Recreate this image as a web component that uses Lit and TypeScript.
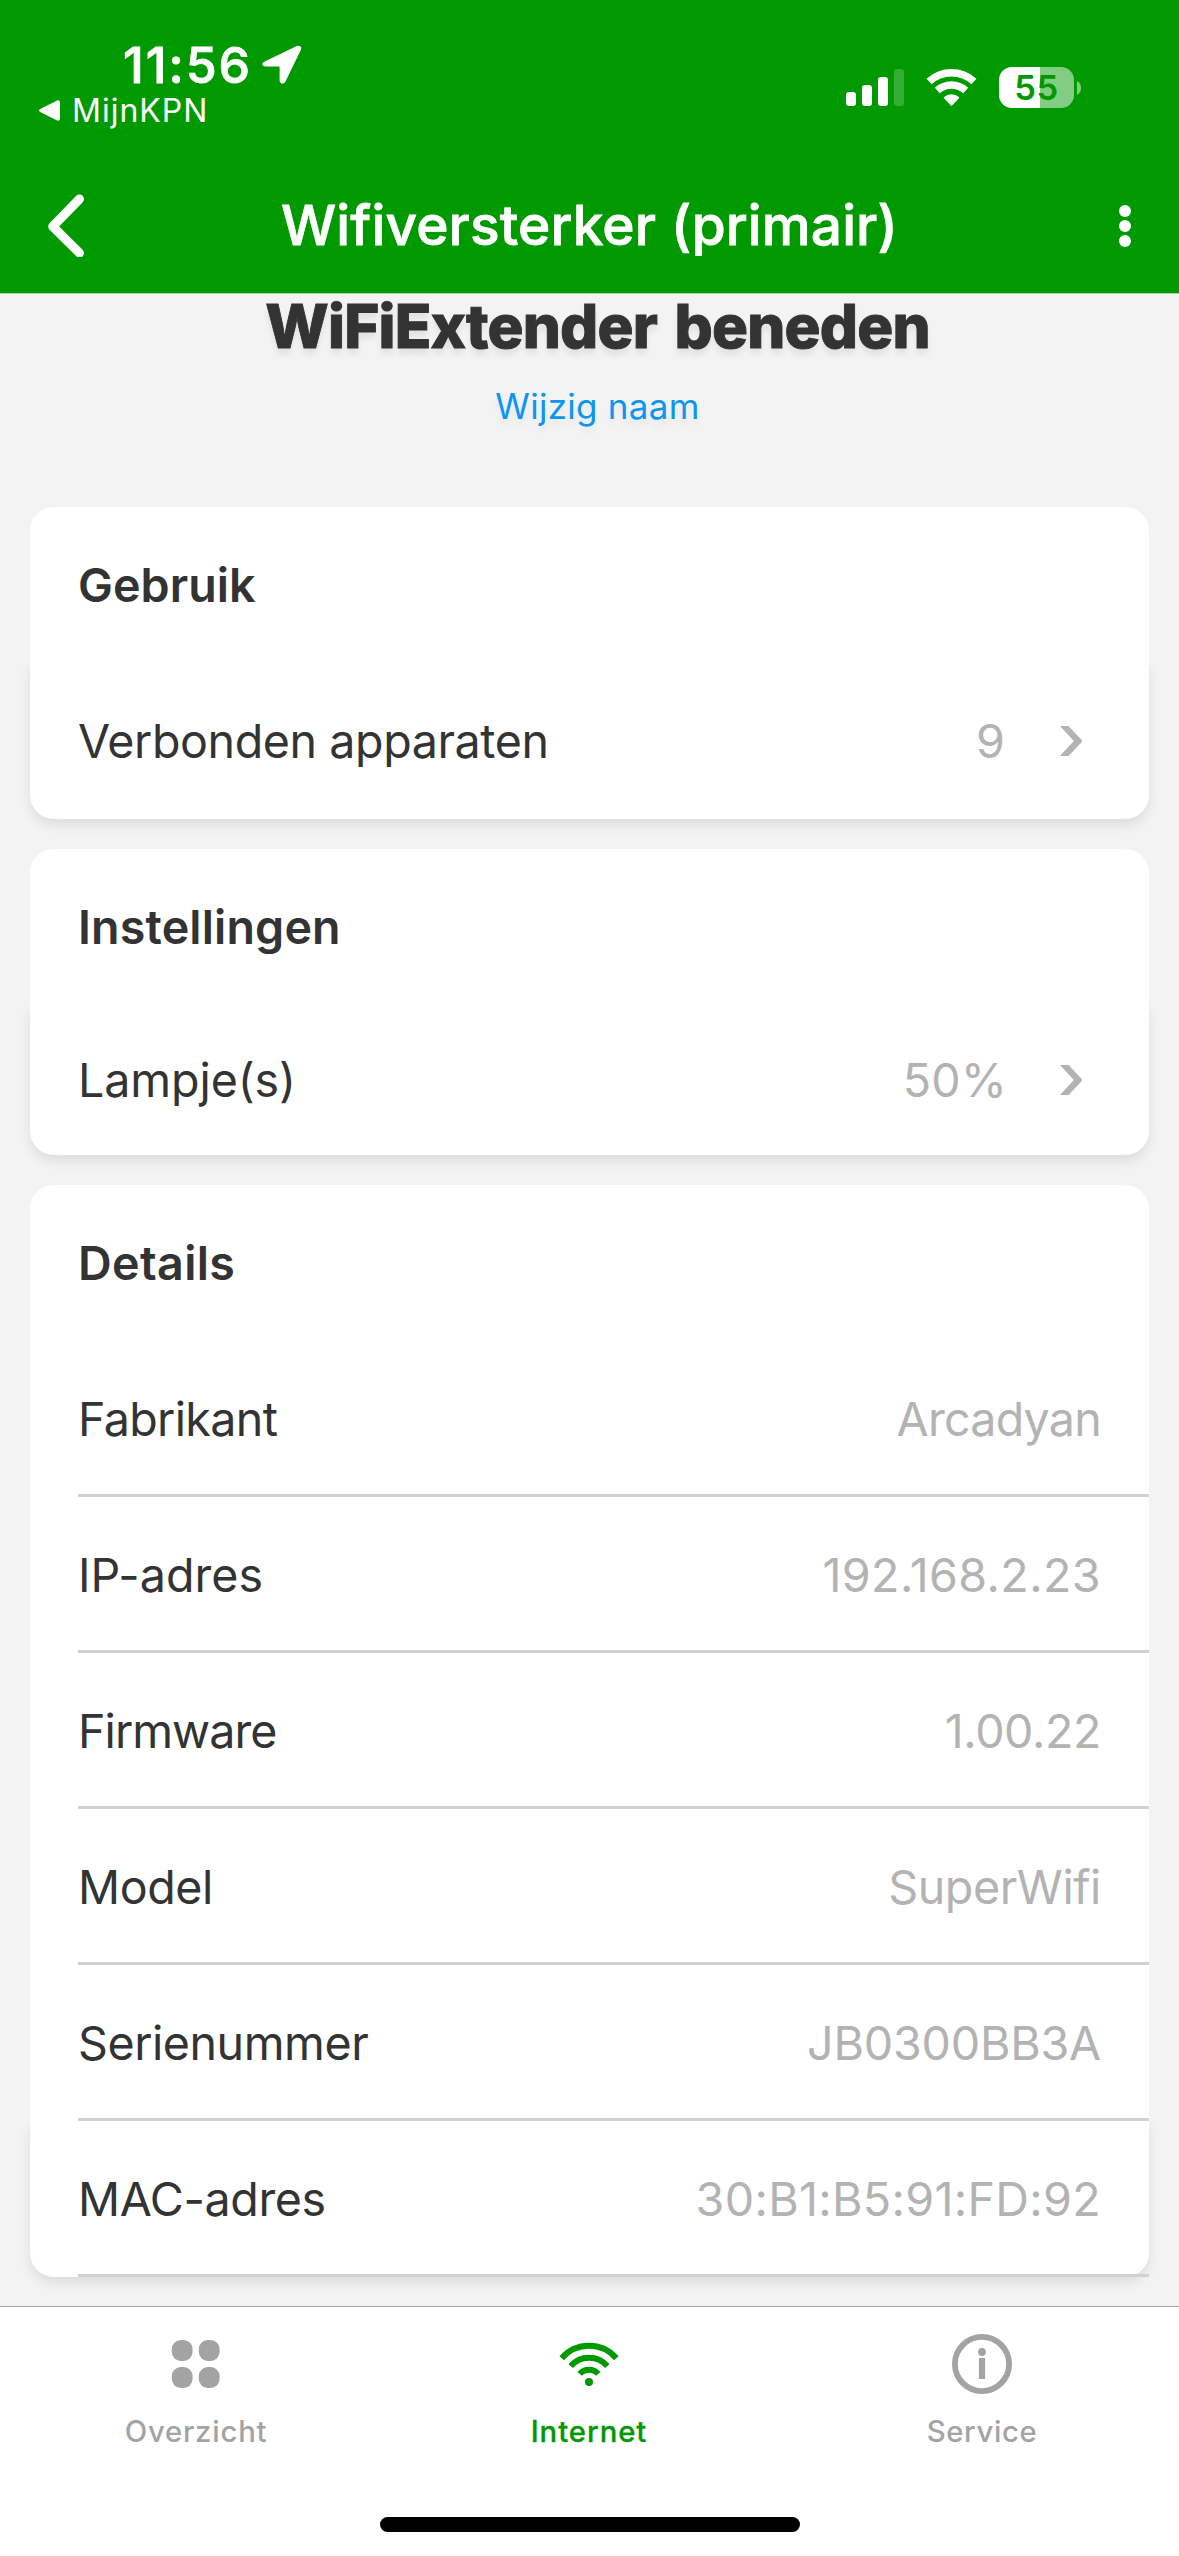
import { LitElement, html, css, svg, nothing } from "lit";
import { customElement, property } from "lit/decorators.js";
import { classMap } from "lit/directives/class-map.js";

/** A piece of text with its own tracking, in pixels. */
interface Label {
  text: string;
  track?: number;
}

interface Row {
  label: Label;
  value: Label;
  link?: boolean;
}

interface Section {
  title: Label;
  rows: Row[];
  divided?: boolean;
  compact?: boolean;
}

interface Tab {
  label: Label;
  icon: "grid" | "wifi" | "info";
  active?: boolean;
}

const SECTIONS: Section[] = [
  {
    title: { text: "Gebruik", track: 0.05 },
    rows: [{ label: { text: "Verbonden apparaten", track: -0.42 }, value: { text: "9" }, link: true }],
  },
  {
    title: { text: "Instellingen", track: 0.16 },
    compact: true,
    rows: [{ label: { text: "Lampje(s)", track: -0.1 }, value: { text: "50%", track: 0.3 }, link: true }],
  },
  {
    title: { text: "Details", track: 0.38 },
    divided: true,
    rows: [
      { label: { text: "Fabrikant", track: -0.65 }, value: { text: "Arcadyan", track: -0.76 } },
      { label: { text: "IP-adres", track: 0.05 }, value: { text: "192.168.2.23", track: 0.4 } },
      { label: { text: "Firmware", track: -0.95 }, value: { text: "1.00.22", track: -0.4 } },
      { label: { text: "Model", track: -0.4 }, value: { text: "SuperWifi", track: -0.4 } },
      { label: { text: "Serienummer", track: -0.45 }, value: { text: "JB0300BB3A", track: -0.2 } },
      { label: { text: "MAC-adres", track: -0.39 }, value: { text: "30:B1:B5:91:FD:92", track: 0.33 } },
    ],
  },
];

const TABS: Tab[] = [
  { label: { text: "Overzicht", track: 0.8 }, icon: "grid" },
  { label: { text: "Internet", track: 0.95 }, icon: "wifi", active: true },
  { label: { text: "Service", track: 0.6 }, icon: "info" },
];

const tracked = (l: Label) => html`<span style="letter-spacing:${l.track ?? 0}px">${l.text}</span>`;

const TAB_ICONS = {
  grid: svg`
    <rect x="5.8" y="6" width="20.8" height="21" rx="9"/>
    <rect x="32.8" y="6" width="20.8" height="21" rx="9"/>
    <rect x="5.8" y="33" width="20.8" height="21" rx="9"/>
    <rect x="32.8" y="33" width="20.8" height="21" rx="9"/>`,
  wifi: svg`
    <g fill="none" stroke="currentColor" stroke-width="6">
      <path d="M2.7 24.3A36.2 36.2 0 0 1 57.3 24.3"/>
      <path d="M11.7 32.1A24.2 24.2 0 0 1 48.3 32.1"/>
      <path d="M20.7 39.9A12.3 12.3 0 0 1 39.3 39.9"/>
    </g>
    <circle cx="30" cy="48" r="4"/>`,
  info: svg`
    <circle cx="30" cy="30" r="27.1" fill="none" stroke="currentColor" stroke-width="5.8"/>
    <circle cx="30" cy="18" r="3.9"/>
    <rect x="26.9" y="24" width="6.2" height="21"/>`,
};

@customElement("status-bar")
export class StatusBar extends LitElement {
  static styles = css`
    :host { display: flex; justify-content: space-between; height: 157px; color: #fff; }
    .left { padding: 36px 0 0 39px; }
    .time { display: flex; align-items: center; gap: 9.5px; height: 58px; padding-left: 84px; font-size: 50px; font-weight: 500; letter-spacing: 2px; -webkit-text-stroke: 0.9px currentColor; }
    .back { display: flex; align-items: center; gap: 12px; height: 33px; font-size: 32px; letter-spacing: 1px; }
    .right { display: flex; align-items: center; gap: 22px; height: 41px; padding: 67px 98px 0 0; }
    .battery { display: flex; align-items: center; gap: 3px; }
    .level { display: flex; align-items: center; justify-content: center; width: 75px; height: 41px; border-radius: 13px;
      background: linear-gradient(90deg, #fff 55%, rgba(255, 255, 255, 0.51) 55%); color: #009900; font-size: 34.5px; font-weight: 600; letter-spacing: 0.6px; line-height: 41px; }
    svg { display: block; }
  `;
  render() {
    return html`
      <div class="left">
        <div class="time">
          <span>11:56</span>
          <svg width="40" height="40" viewBox="0 0 40 40" fill="#fff">
            <path d="M2.6 16.6 34.8 1.1c3-1.4 5.4.8 4 3.8L23.6 36.3c-1.4 3.3-5.9 3-6-.8V22.6c0-.9-.3-1.2-1.2-1.2H3.6c-3.9 0-4.5-3.3-1-4.8Z"/>
          </svg>
        </div>
        <div class="back">
          <svg width="21" height="21" viewBox="0 0 21 21" fill="#fff">
            <path d="M1.2 9.1 17.6.7C19.4-.1 21 .4 21 2.4v16.2c0 2-1.6 2.5-3.4 1.7L1.2 11.9c-1.6-.8-1.6-2 0-2.8Z"/>
          </svg>
          <span>MijnKPN</span>
        </div>
      </div>
      <div class="right">
        <svg width="58" height="37" viewBox="0 0 58 37" fill="#fff">
          <rect y="23" width="10" height="14" rx="3"/>
          <rect x="16" y="16" width="10" height="21" rx="3"/>
          <rect x="32" y="8" width="10" height="29" rx="3"/>
          <rect x="48" width="10" height="37" rx="3" opacity="0.2"/>
        </svg>
        <svg width="51" height="37" viewBox="0 0 51 37" fill="none" stroke="#fff" stroke-width="7.5">
          <path d="M3.1 12.6A33.1 33.1 0 0 1 47.9 12.6"/>
          <path d="M11.3 21.5A21 21 0 0 1 39.7 21.5"/>
          <path d="M18.6 28.6A11 11 0 0 1 32.4 28.6L25.5 35.9Z" fill="#fff" stroke-width="1.6" stroke-linejoin="round"/>
        </svg>
        <div class="battery">
          <div class="level">55</div>
          <svg width="4" height="14" viewBox="0 0 4 14" fill="#fff" opacity="0.5">
            <path d="M0 0C2.6 1.2 4 4 4 7s-1.4 5.8-4 7Z"/>
          </svg>
        </div>
      </div>`;
  }
}

@customElement("nav-bar")
export class NavBar extends LitElement {
  static styles = css`
    :host { display: grid; grid-template-columns: 1fr auto 1fr; align-items: center; height: 136px; padding: 0 48px; color: #fff; }
    h1 { margin: 0; font-size: 55px; font-weight: 500; letter-spacing: 0.12px; line-height: 66px; white-space: nowrap; -webkit-text-stroke: 0.8px currentColor; }
    svg { display: block; }
    .more { justify-self: end; }
  `;
  render() {
    return html`
      <svg width="37" height="64" viewBox="0 0 37 64" fill="none" stroke="#fff" stroke-width="9" stroke-linecap="round" stroke-linejoin="round">
        <path d="M31.5 6 4.7 33.5 31.5 60"/>
      </svg>
      <h1>Wifiversterker (primair)</h1>
      <svg class="more" width="12" height="44" viewBox="0 0 12 44" fill="#fff">
        <circle cx="6" cy="8" r="6"/><circle cx="6" cy="23" r="6"/><circle cx="6" cy="38" r="6"/>
      </svg>`;
  }
}

@customElement("info-card")
export class InfoCard extends LitElement {
  static styles = css`
    :host { display: block; color: #333; font-size: 46.6px; }
    .title, .row { box-sizing: border-box; height: 156px; background: #fff; }
    .title { display: flex; align-items: center; padding: 0 48px; border-radius: 24px 24px 0 0; font-weight: 600; }
    .row { display: grid; grid-template-rows: 1fr; padding-left: 48px; }
    .compact .row { height: 150px; }
    .divided .row { grid-template-rows: 156px; }
    .last { border-radius: 0 0 24px 24px; box-shadow: 0 6px 12px rgba(0, 0, 0, 0.09); clip-path: inset(0 -30px -30px -30px); }
    .line { grid-area: 1 / 1; display: flex; align-items: center; justify-content: space-between; padding-right: 48px; }
    .link { padding-right: 67px; }
    .rule { grid-area: 1 / 1; align-self: end; height: 3px; background: #d1d1d1; }
    .value { display: flex; align-items: center; gap: 55px; color: #b3b3b3; }
    .compact .value { gap: 53px; }
    svg { display: block; }
  `;
  @property({ attribute: false }) section!: Section;
  render() {
    const { title, rows, divided, compact } = this.section;
    return html`
      <section class=${classMap({ divided: !!divided, compact: !!compact })}>
        <div class="title">${tracked(title)}</div>
        ${rows.map(
          (r, i) => html`
            <div class=${classMap({ row: true, last: i === rows.length - 1 })}>
              <div class=${classMap({ line: true, link: !!r.link })}>
                ${tracked(r.label)}
                <span class="value">
                  ${tracked(r.value)}
                  ${r.link
                    ? html`<svg width="22" height="30" viewBox="0 0 22 30" fill="currentColor">
                        <path d="M0 0H8.5L21.3 13.4Q22.6 15 21.3 16.6L8.5 30H0L13.8 15Z"/>
                      </svg>`
                    : nothing}
                </span>
              </div>
              ${divided ? html`<div class="rule"></div>` : nothing}
            </div>`
        )}
      </section>`;
  }
}

@customElement("tab-bar")
export class TabBar extends LitElement {
  static styles = css`
    :host { display: flex; flex-direction: column; align-items: center; box-sizing: border-box; height: 250px; border-top: 1px solid #a6a6a6; background: #fff; }
    .tabs { display: grid; grid-template-columns: repeat(3, 1fr); width: 100%; height: 210px; }
    .tab { display: flex; flex-direction: column; align-items: center; gap: 20px; padding: 27px 1px 0 0; color: #a3a3a3; font-size: 29.3px; font-weight: 500; line-height: 36px; }
    .active { color: #009900; -webkit-text-stroke: 0.3px currentColor; }
    .home { width: 420px; height: 15px; border-radius: 8px; background: #000; }
    svg { display: block; }
  `;
  render() {
    return html`
      <div class="tabs">
        ${TABS.map(
          (t) => html`
            <div class=${classMap({ tab: true, active: !!t.active })}>
              <svg width="60" height="60" viewBox="0 0 60 60" fill="currentColor">${TAB_ICONS[t.icon]}</svg>
              ${tracked(t.label)}
            </div>`
        )}
      </div>
      <div class="home"></div>`;
  }
}

@customElement("app-root")
export class AppRoot extends LitElement {
  static styles = css`
    :host { display: flex; flex-direction: column; width: 1179px; height: 2556px; overflow: hidden; background: #f3f3f3; font-family: Inter, "Liberation Sans", sans-serif; }
    header { border-bottom: 1px solid #a2d6a2; background: #009900; }
    .name { display: flex; flex-direction: column; align-items: center; height: 213px; padding-left: 16px; text-shadow: 0 6px 6px rgba(0, 0, 0, 0.08); }
    h2 { margin: 0 0 25px; color: #333; font-size: 60px; font-weight: 800; letter-spacing: -0.8px; word-spacing: 5px; line-height: 65px; -webkit-text-stroke: 0.9px currentColor; }
    .rename { color: #0c96f0; font-size: 35px; letter-spacing: 0.28px; line-height: 44px; text-shadow: 0 6px 6px rgba(0, 0, 0, 0.05); }
    .cards { display: flex; flex: 1; flex-direction: column; gap: 30px; padding: 0 30px; }
  `;
  render() {
    return html`
      <header>
        <status-bar></status-bar>
        <nav-bar></nav-bar>
      </header>
      <div class="name">
        <h2>WiFiExtender beneden</h2>
        <span class="rename">Wijzig naam</span>
      </div>
      <main class="cards">${SECTIONS.map((s) => html`<info-card .section=${s}></info-card>`)}</main>
      <tab-bar></tab-bar>`;
  }
}
